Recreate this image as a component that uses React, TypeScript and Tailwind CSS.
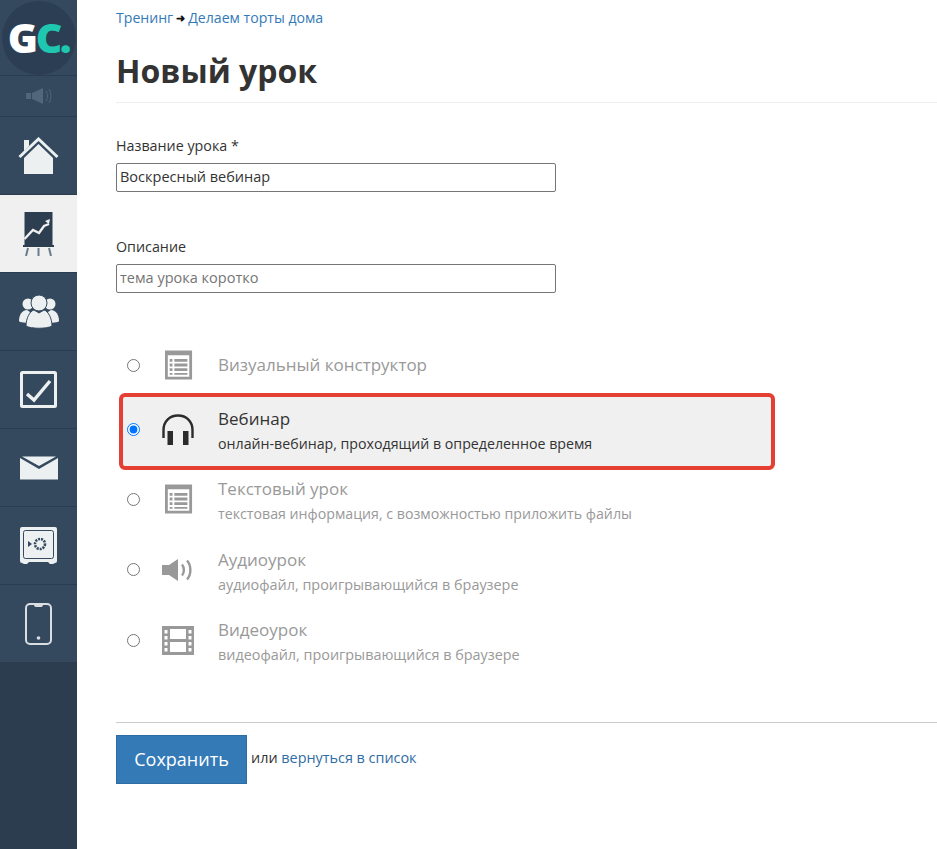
import React from "react";

const font = { fontFamily: '"Open Sans", "Noto Sans", sans-serif' };

function ListIcon() {
  return (
    <svg width="28" height="30" viewBox="0 0 30 31" fill="none">
      <path fillRule="evenodd" d="M0 0H29V31H0ZM3 5V28H26V5Z" fill="#999999" />
      <path d="M5 9h3v3H5zM5 14h3v3H5zM5 19h3v3H5zM5 24h3v2H5z" fill="#999999" />
      <path d="M10 9h14v3H10zM10 14h14v3H10zM10 19h14v3H10zM10 24h14v2H10z" fill="#999999" />
    </svg>
  );
}

function Headphones() {
  return (
    <svg width="32" height="31" viewBox="0 0 32 31" fill="none" className="mr-[2px]">
      <path d="M1.5 24V16C1.5 7.5 7.5 1.5 16 1.5S30.5 7.5 30.5 16V24" stroke="#2b2b2b" strokeWidth="2.4" />
      <rect x="5.5" y="17" width="5.5" height="14" fill="#2b2b2b" />
      <rect x="21" y="17" width="5.5" height="14" fill="#2b2b2b" />
    </svg>
  );
}

function Speaker() {
  return (
    <svg width="31" height="22" viewBox="0 0 31 22" fill="none" className="mr-[4px]">
      <path d="M0 6H7L16 0V22L7 16H0Z" fill="#999999" />
      <path d="M20 5.5C22.5 8.5 22.5 13.5 20 16.5" stroke="#999999" strokeWidth="2.4" />
      <path d="M25 1.5C29.5 6.5 29.5 15.5 25 20.5" stroke="#999999" strokeWidth="2.4" />
    </svg>
  );
}

function Film() {
  return (
    <svg width="32" height="29" viewBox="0 0 32 29" fill="none" className="mr-[2px]">
      <path
        fillRule="evenodd"
        d="M0 0H32V29H0ZM8 3V13H24V3ZM8 16V26H24V16ZM2.5 4V7.5H5.5V4ZM2.5 10V13.5H5.5V10ZM2.5 16V19.5H5.5V16ZM2.5 22V25.5H5.5V22ZM26.5 4V7.5H29.5V4ZM26.5 10V13.5H29.5V10ZM26.5 16V19.5H29.5V16ZM26.5 22V25.5H29.5V22Z"
        fill="#999999"
      />
    </svg>
  );
}

const navClass = "h-[78px] flex items-center justify-center border-b border-[#2b3c4f]";

function Sidebar() {
  return (
    <aside className="w-[77px] shrink-0 bg-[#2c3d50] flex flex-col">
      <div className="h-[76px] bg-[#34495e] border-b border-[#2b3c4f] flex items-center justify-center overflow-hidden">
        <div className="w-[74px] h-[74px] rounded-full bg-[#2c3e53] flex items-center justify-center text-[41px] font-extrabold tracking-[-2.5px] leading-none">
          <span className="text-white">G</span>
          <span className="text-[#1fc7b0]">C.</span>
        </div>
      </div>
      <div className="h-[41px] bg-[#34495e] border-b border-[#2b3c4f] flex items-center justify-center">
        <svg width="26" height="16" viewBox="0 0 26 16" fill="none">
          <path d="M0 5H5V11H0ZM6 5L17 0V16L6 11Z" fill="#51667b" />
          <path d="M20 3C22 6 22 10 20 13M23 1C25.5 5 25.5 11 23 15" stroke="#51667b" strokeWidth="1" />
        </svg>
      </div>
      <div className={`${navClass} bg-[#34495e]`}>
        <svg width="41" height="38" viewBox="0 0 41 38" fill="none">
          <path d="M6 3H11V9L6 14Z" fill="#ecf0f1" />
          <path d="M1.5 20L20.5 2L39.5 20" stroke="#ecf0f1" strokeWidth="3" />
          <path d="M6 21L20.5 7L35 21V37H6Z" fill="#ecf0f1" />
        </svg>
      </div>
      <div className="h-[78px] bg-[#f0f0f0] border-b border-[#2b3c4f] flex items-center justify-center">
        <svg width="31" height="44" viewBox="0 0 31 44" fill="none">
          <rect x="1.5" y="0" width="28" height="33" fill="#2c3e50" />
          <path d="M1.5 27L10 18L16 21L21 14L26 12" stroke="#f0f0f0" strokeWidth="2.4" />
          <path d="M22 9L27 7L26 12Z" fill="#f0f0f0" />
          <path d="M0 34H31" stroke="#2c3e50" strokeWidth="2" />
          <path d="M5 36L3 44M15.5 36V44M26 36L28 44" stroke="#6b7b8c" strokeWidth="2" />
        </svg>
      </div>
      <div className={`${navClass} bg-[#34495e]`}>
        <svg width="40" height="35" viewBox="0 0 40 35" fill="none">
          <circle cx="9" cy="10" r="5.5" fill="#ecf0f1" />
          <circle cx="31" cy="10" r="5.5" fill="#ecf0f1" />
          <path d="M0 27C0 21 3 16 8 16L11 18L8 29L1 28Z" fill="#ecf0f1" />
          <path d="M40 27C40 21 37 16 32 16L29 18L32 29L39 28Z" fill="#ecf0f1" />
          <circle cx="20" cy="9" r="8" fill="#ecf0f1" stroke="#34495e" strokeWidth="1" />
          <path d="M7 32C7 24 11 17 15 16L20 19L25 16C29 17 33 24 33 32C28 35 12 35 7 32Z" fill="#ecf0f1" stroke="#34495e" strokeWidth="1" />
        </svg>
      </div>
      <div className={`${navClass} bg-[#34495e]`}>
        <svg width="37" height="37" viewBox="0 0 37 37" fill="none">
          <rect x="1.5" y="1.5" width="34" height="34" rx="1" stroke="#ecf0f1" strokeWidth="3" />
          <path d="M7 23L14 29L30 10" stroke="#ecf0f1" strokeWidth="3.4" />
        </svg>
      </div>
      <div className={`${navClass} bg-[#34495e]`}>
        <svg width="38" height="24" viewBox="0 0 38 24" fill="none">
          <path d="M0 2L19 13L38 2V23.5H0Z" fill="#ecf0f1" />
          <path d="M2 0.5H36L19 10Z" fill="#ecf0f1" />
        </svg>
      </div>
      <div className={`${navClass} bg-[#34495e]`}>
        <svg width="37" height="37" viewBox="0 0 37 37" fill="none">
          <path d="M2 0H35Q37 0 37 2V34Q37 36 35 36L33 37H30L28 35H9L7 37H4L2 36Q0 36 0 34V2Q0 0 2 0Z" fill="#ecf0f1" />
          <rect x="3.5" y="3.5" width="30" height="28" rx="2" stroke="#34495e" strokeWidth="1" />
          <circle cx="20" cy="17" r="5" stroke="#34495e" strokeWidth="2.6" strokeDasharray="2 1" />
          <path d="M8 14V20L12 17Z" fill="#34495e" />
        </svg>
      </div>
      <div className={`${navClass} bg-[#34495e]`}>
        <svg width="27" height="42" viewBox="0 0 27 42" fill="none">
          <rect x="1" y="1" width="25" height="40" rx="4" stroke="#d9dee2" strokeWidth="2" />
          <path d="M9 1H18V2Q18 4 16 4H11Q9 4 9 2Z" fill="#d9dee2" />
          <circle cx="13.5" cy="35" r="1.8" fill="#d9dee2" />
        </svg>
      </div>
    </aside>
  );
}

function Row({
  icon,
  title,
  desc,
  active,
  className,
  descClass = "text-[14.2px]",
}: {
  icon: React.ReactNode;
  title: string;
  desc?: string;
  active?: boolean;
  className: string;
  descClass?: string;
}) {
  return (
    <div
      className={`${className} w-[656px] flex items-center ${
        active ? "bg-[#f0f0f0] border-4 border-[#e53e33] rounded-[6px] pl-[4px]" : "pl-[8px]"
      }`}
    >
      <div className={`flex items-center ${desc ? "mb-[5px]" : ""}`}>
        <input
          type="radio"
          name="kind"
          defaultChecked={active}
          className="w-[13px] h-[13px] m-0 shrink-0"
        />
        <div className="w-[78px] shrink-0 flex justify-center">{icon}</div>
      </div>
      <div className={active ? "text-[#333333]" : "text-[#999999]"}>
        <div className="text-[17px] leading-[24px]">{title}</div>
        {desc && <div className={`${descClass} leading-[25px]`}>{desc}</div>}
      </div>
    </div>
  );
}

export default function App() {
  return (
    <div className="h-[849px] w-[937px] flex overflow-hidden bg-white text-[#333333]" style={font}>
      <Sidebar />
      <main className="flex-1 min-w-0 pl-[39px]">
        <div className="pt-[8px] text-[14.1px] leading-[20px] text-[#337ab7] flex items-center gap-[3px]">
          <span>Тренинг</span>
          <span className="text-[#111111] text-[11px] font-bold">➜</span>
          <span>Делаем торты дома</span>
        </div>
        <h1 className="mt-[21px] h-[54px] border-b border-[#eeeeee] text-[32px] leading-[44px] font-bold text-[#333333]">
          Новый урок
        </h1>
        <label className="block mt-[33px] text-[14.3px] leading-[20px]">Название урока *</label>
        <input
          readOnly
          value="Воскресный вебинар"
          className="block mt-[7px] w-[440px] h-[29px] px-[3px] pb-[2px] border border-[#767676] rounded-[2px] text-[14.5px] text-[#333333] outline-none"
        />
        <label className="block mt-[45px] text-[14.3px] leading-[20px]">Описание</label>
        <input
          readOnly
          placeholder="тема урока коротко"
          className="block mt-[7px] w-[440px] h-[29px] px-[3px] pb-[2px] border border-[#767676] rounded-[2px] text-[14.5px] placeholder:text-[#757575] outline-none"
        />
        <div className="mt-[47px] ml-[3px] flex flex-col">
          <Row className="h-[50px] mb-[3px]" icon={<ListIcon />} title="Визуальный конструктор" />
          <Row className="h-[77px]" active icon={<Headphones />} title="Вебинар" desc="онлайн-вебинар, проходящий в определенное время" />
          <Row className="h-[63px]" icon={<ListIcon />} title="Текстовый урок" desc="текстовая информация, с возможностью приложить файлы" />
          <Row className="h-[70px] mt-[4px]" descClass="text-[14.4px]" icon={<Speaker />} title="Аудиоурок" desc="аудиофайл, проигрывающийся в браузере" />
          <Row className="h-[71px]" descClass="text-[14.4px]" icon={<Film />} title="Видеоурок" desc="видеофайл, проигрывающийся в браузере" />
        </div>
        <div className="mt-[44px] border-t border-[#cccccc] pt-[12px] flex items-center">
          <button className="w-[131px] h-[49px] pb-[1px] bg-[#337ab7] border border-[#2e6da4] text-white text-[18px]">
            Сохранить
          </button>
          <span className="ml-[4px] mb-[3px] text-[14.4px]">
            или <span className="text-[#2f6da3]">вернуться в список</span>
          </span>
        </div>
      </main>
    </div>
  );
}
